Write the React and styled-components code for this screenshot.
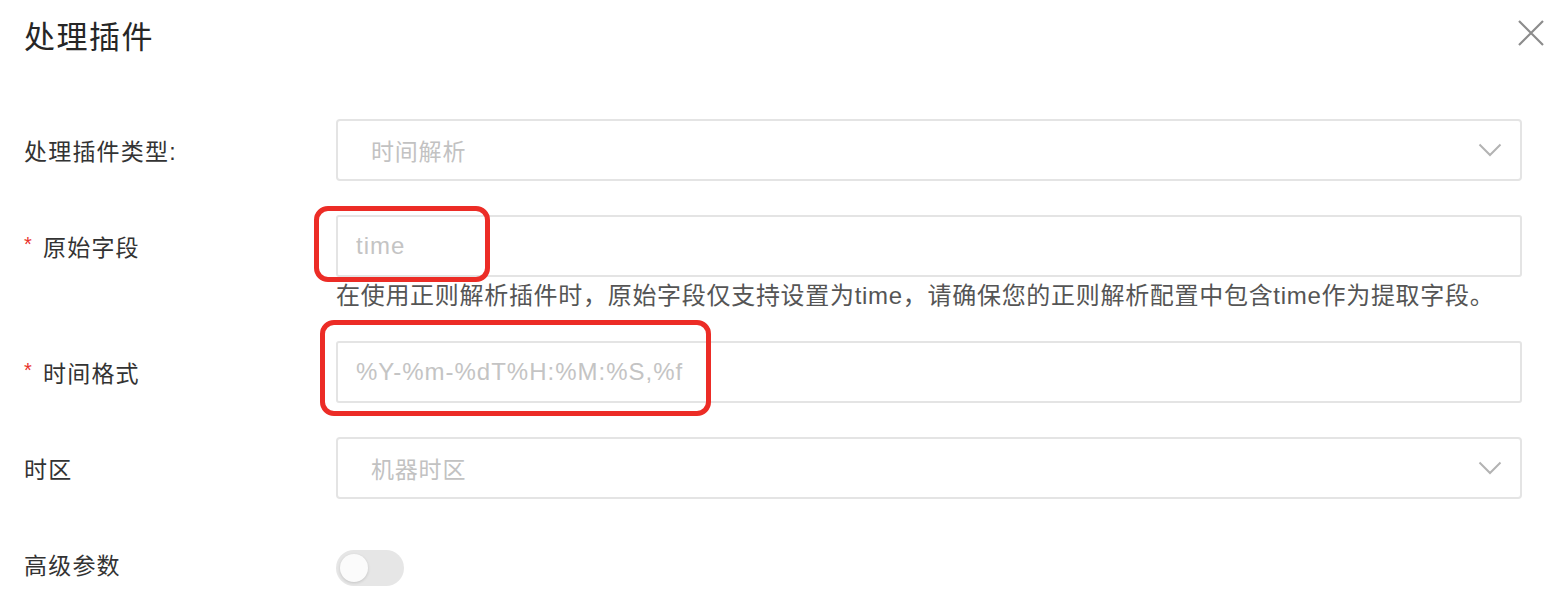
import React from "react";
import styled, { createGlobalStyle } from "styled-components";

const GlobalStyle = createGlobalStyle`
	html, body {
		margin: 0;
		padding: 0;
		background: #fff;
	}
	body {
		font-family: "Liberation Sans", "Noto Sans CJK SC", sans-serif;
		color: #333;
	}
	* {
		box-sizing: border-box;
	}
`;

const Drawer = styled.div`
	width: 1554px;
	height: 610px;
	overflow: hidden;
	background: #fff;
`;

const Header = styled.div`
	display: flex;
	align-items: center;
	justify-content: space-between;
	height: 68px;
	padding: 0 10px 0 24px;
`;

const Title = styled.h2`
	margin: 0;
	font-size: 31px;
	font-weight: 400;
	color: #262626;
	letter-spacing: 1.5px;
`;

const CloseButton = styled.button`
	display: flex;
	align-items: center;
	justify-content: center;
	width: 26px;
	height: 26px;
	padding: 0;
	margin-top: -2px;
	border: none;
	background: none;
	cursor: pointer;
`;

const Form = styled.form`
	padding: 51px 32px 0 24px;
`;

const FormItem = styled.div`
	display: grid;
	grid-template-columns: 312px 1fr;
	margin-bottom: ${(p) => (p.$tight ? "29px" : "34px")};
`;

const Label = styled.label`
	display: flex;
	align-items: center;
	height: 62px;
	font-size: 23px;
	color: #333;
	letter-spacing: 1.2px;
`;

const Required = styled.span`
	color: #e8312b;
	font-size: 20px;
	margin-right: 10px;
	margin-top: -4px;
`;

const Control = styled.div`
	position: relative;
	display: flex;
	flex-direction: column;
	min-width: 0;
`;

const Input = styled.input`
	display: block;
	width: 100%;
	height: 62px;
	padding: 0 18px;
	border: 2px solid #e4e4e4;
	border-radius: 3px;
	background: #fff;
	font-family: "Liberation Sans", "Noto Sans CJK SC", sans-serif;
	font-size: 24px;
	letter-spacing: 1px;
	color: #333;
	outline: none;

	&::placeholder {
		color: #c4c4c4;
	}
`;

const Select = styled.div`
	display: flex;
	align-items: center;
	justify-content: space-between;
	height: 62px;
	padding: 0 18px 0 33px;
	border: 2px solid #e4e4e4;
	border-radius: 4px;
	background: #fff;
	font-size: 23px;
	letter-spacing: 0.8px;
	color: #c2c2c2;
	cursor: pointer;
`;

const Help = styled.div`
	padding-top: 3px;
	line-height: 32px;
	font-size: 24px;
	letter-spacing: 0.7px;
	color: #555;
	white-space: nowrap;
`;

const Highlight = styled.div`
	position: absolute;
	left: ${(p) => p.$left}px;
	top: ${(p) => p.$top}px;
	width: ${(p) => p.$width}px;
	height: ${(p) => p.$height}px;
	border: 5px solid #ec2c26;
	border-radius: 14px;
	pointer-events: none;
`;

const Switch = styled.button`
	position: relative;
	width: 68px;
	height: 36px;
	padding: 0;
	border: none;
	border-radius: 18px;
	background: #e6e6e6;
	cursor: pointer;

	&::after {
		content: "";
		position: absolute;
		left: 4px;
		top: 4px;
		width: 28px;
		height: 28px;
		border-radius: 50%;
		background: #fbfbfb;
		box-shadow: 0 1px 3px rgba(0, 0, 0, 0.15);
	}
`;

const SwitchRow = styled.div`
	display: flex;
	align-items: center;
	height: 62px;
	padding-top: 8px;
`;

function Chevron() {
	return (
		<svg width="24" height="14" viewBox="0 0 24 14" fill="none">
			<path d="M1.5 1.5L12 12L22.5 1.5" stroke="#b3b3b3" strokeWidth="2" />
		</svg>
	);
}

function CloseIcon() {
	return (
		<svg width="26" height="26" viewBox="0 0 26 26" fill="none">
			<path d="M1 1L25 25M25 1L1 25" stroke="#8c8c8c" strokeWidth="2.2" />
		</svg>
	);
}

export default function App() {
	return (
		<>
			<GlobalStyle />
			<Drawer>
				<Header>
					<Title>处理插件</Title>
					<CloseButton type="button" aria-label="close">
						<CloseIcon />
					</CloseButton>
				</Header>
				<Form onSubmit={(e) => e.preventDefault()}>
					<FormItem>
						<Label>处理插件类型:</Label>
						<Control>
							<Select>
								<span>时间解析</span>
								<Chevron />
							</Select>
						</Control>
					</FormItem>

					<FormItem $tight>
						<Label>
							<Required>*</Required>原始字段
						</Label>
						<Control>
							<Input readOnly placeholder="time" />
							<Highlight $left={-22} $top={-9} $width={176} $height={76} />
							<Help>
								在使用正则解析插件时，原始字段仅支持设置为time，请确保您的正则解析配置中包含time作为提取字段。
							</Help>
						</Control>
					</FormItem>

					<FormItem>
						<Label>
							<Required>*</Required>时间格式
						</Label>
						<Control>
							<Input readOnly placeholder="%Y-%m-%dT%H:%M:%S,%f" />
							<Highlight $left={-16} $top={-21} $width={391} $height={96} />
						</Control>
					</FormItem>

					<FormItem>
						<Label>时区</Label>
						<Control>
							<Select>
								<span>机器时区</span>
								<Chevron />
							</Select>
						</Control>
					</FormItem>

					<FormItem>
						<Label>高级参数</Label>
						<Control>
							<SwitchRow>
								<Switch type="button" aria-label="advanced" />
							</SwitchRow>
						</Control>
					</FormItem>
				</Form>
			</Drawer>
		</>
	);
}
